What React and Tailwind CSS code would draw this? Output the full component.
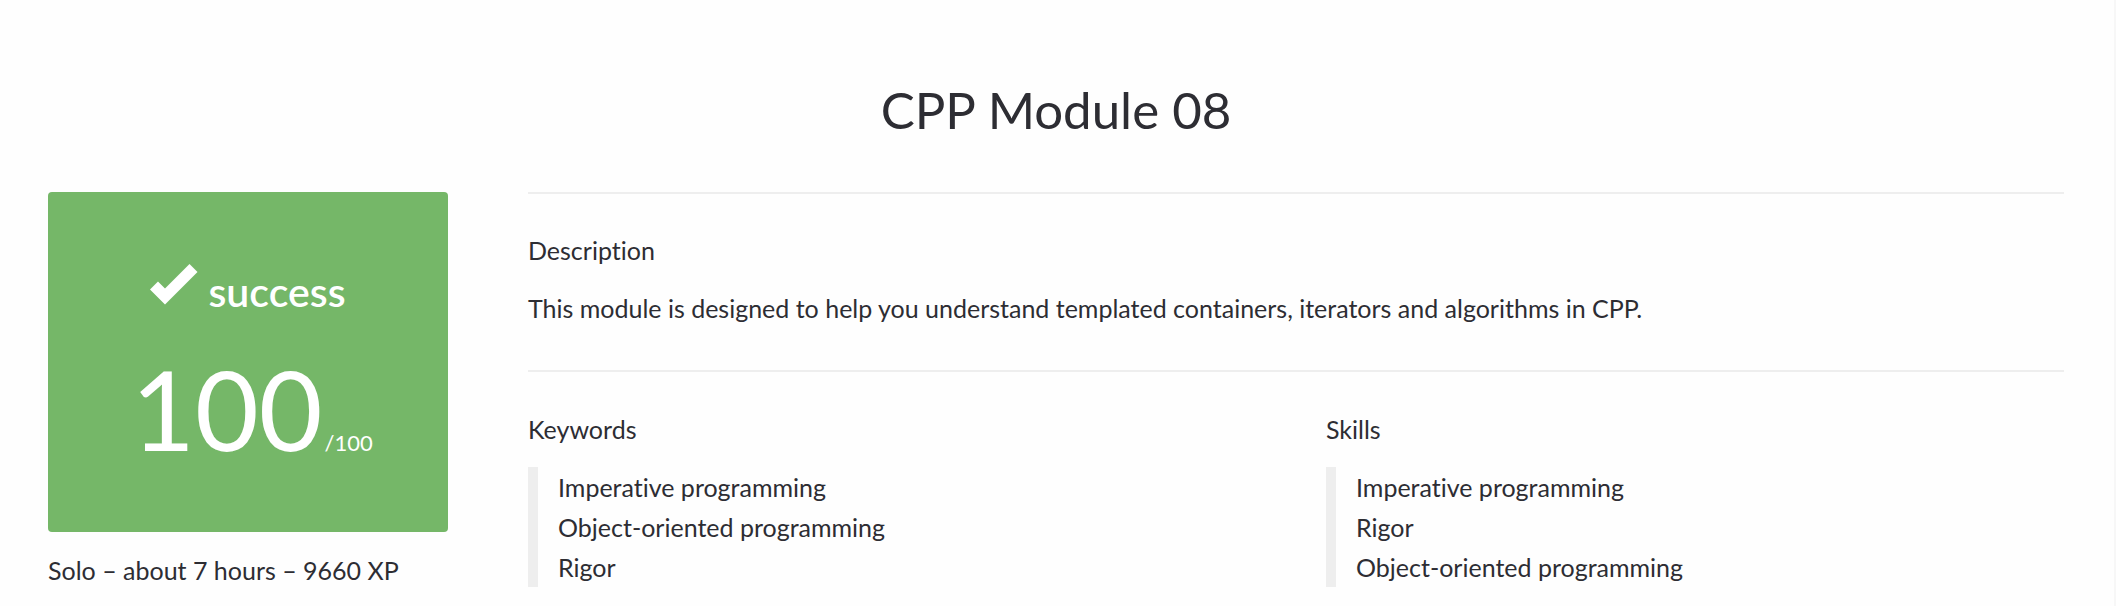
const keywords = ["Imperative programming", "Object-oriented programming", "Rigor"];
const skills = ["Imperative programming", "Rigor", "Object-oriented programming"];

function CheckIcon() {
  return (
    <svg viewBox="0 0 48 41" className="h-[41px] w-12 fill-white" aria-hidden="true">
      <path d="M0 25.5 8 17.5 15 24.5 39.5 0 47.5 8 15 40.5Z" />
    </svg>
  );
}

function ScoreCard() {
  return (
    <div className="flex h-[340px] flex-col items-center rounded bg-[#75b768] pt-[72px] text-white">
      <div className="flex items-start gap-2.5">
        <CheckIcon />
        <span className="pt-1 text-[41px] leading-12 font-semibold">success</span>
      </div>
      <div className="mt-7 flex items-baseline gap-0.5 pl-2">
        <span className="text-[110px] leading-[128px]">100</span>
        <span className="text-[22px]">/100</span>
      </div>
    </div>
  );
}

function TagList({ title, items }) {
  return (
    <section>
      <h2 className="mb-[18px]">{title}</h2>
      <ul className="border-l-10 border-[#eeeeee] pl-5">
        {items.map((item) => (
          <li key={item}>{item}</li>
        ))}
      </ul>
    </section>
  );
}

export default function App() {
  return (
    <main className="min-h-screen border-r-2 border-[#f7f7f7] bg-[#fefefe] pt-[78px] pr-[50px] pb-4 pl-12 font-['Lato',sans-serif] text-[25px] leading-10 text-[#2d2d33] [font-variant-ligatures:none]">
      <h1 className="mb-[50px] text-center text-[51px] leading-16">CPP Module 08</h1>
      <div className="flex gap-20">
        <aside className="w-100 shrink-0">
          <ScoreCard />
          <p className="mt-[18px] whitespace-nowrap">Solo – about 7 hours – 9660 XP</p>
        </aside>
        <div className="min-w-0 flex-1">
          <section className="border-t-2 border-[#eeeeee] pt-9 pb-[42px]">
            <h2 className="mb-[18px]">Description</h2>
            <p>
              This module is designed to help you understand templated containers, iterators and
              algorithms in CPP.
            </p>
          </section>
          <div className="grid grid-cols-2 gap-15 border-t-2 border-[#eeeeee] pt-[37px]">
            <TagList title="Keywords" items={keywords} />
            <TagList title="Skills" items={skills} />
          </div>
        </div>
      </div>
    </main>
  );
}
